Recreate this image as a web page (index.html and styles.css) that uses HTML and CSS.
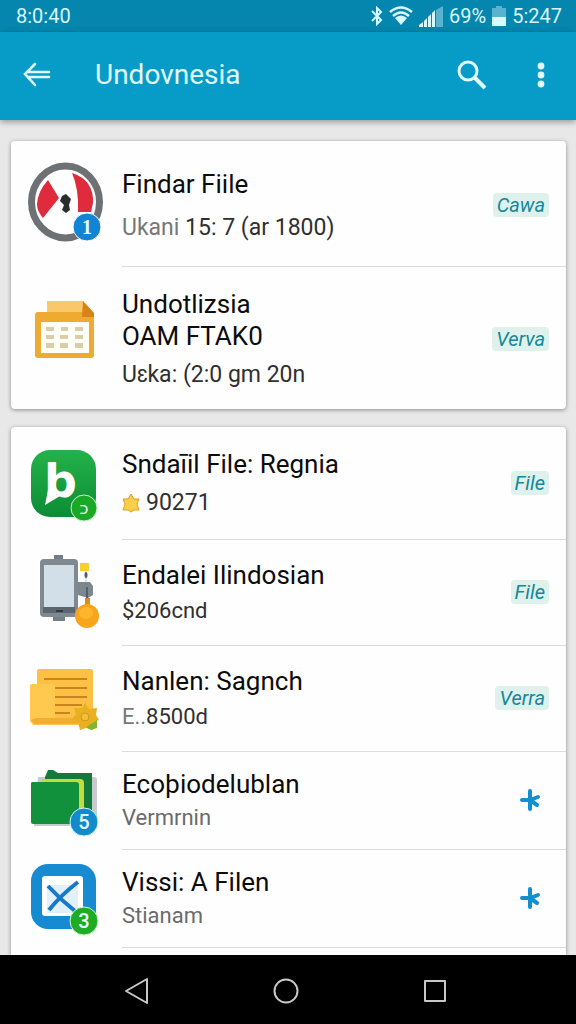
FILE: index.html
```html
<!DOCTYPE html>
<html lang="id">
<head>
    <meta charset="UTF-8">
    <meta name="viewport" content="width=device-width, initial-scale=1.0">
    <title>Undovnesia</title>
    <link rel="stylesheet" href="styles.css">
</head>
<body>
    <div class="status-bar">
        <span>8:0:40</span>
        <div class="status-icons">
            <svg width="12" height="20" viewBox="0 0 12 20" fill="none" stroke="currentColor" stroke-width="2"><path d="M1 5l9 9-4 4V2l4 4-9 9"/></svg>
            <svg width="24" height="20" viewBox="0 0 24 20" fill="none" stroke="currentColor" stroke-width="2.6"><path d="M1 6Q12-3 23 6M4 10Q12 3 20 10"/><path d="M6 12Q12 7 18 12L12 19z" fill="currentColor" stroke="none"/></svg>
            <svg width="24" height="21" viewBox="0 0 24 21" fill="currentColor"><path d="M0 21v-2l4-3v5zM5 21v-6l3-3v9zM9 21V11l3-3v13zM13 21V7l3-3v17z"/><path d="M17 21V4l7-4v21z" opacity=".4"/></svg>
            <span>69%</span>
            <svg width="14" height="20" viewBox="0 0 14 20" fill="currentColor"><path d="M0 2h4V0h6v2h4v10H0z" opacity=".4"/><path d="M0 11h14v9H0z"/></svg>
            <span>5:247</span>
        </div>
    </div>

    <header class="app-bar">
        <button class="icon-button" aria-label="Kembali">
            <svg width="28" height="26" viewBox="0 0 28 26" fill="none" stroke="currentColor" stroke-width="2.6" stroke-linecap="round"><path d="M12 2L2 12l10 11M5 10h21M5 15h21"/></svg>
        </button>
        <h1>Undovnesia</h1>
        <button class="icon-button" aria-label="Cari">
            <svg width="30" height="30" viewBox="0 0 30 30" fill="none" stroke="currentColor" stroke-width="3"><circle cx="11" cy="11" r="9"/><path d="M17 17l11 11" stroke-width="4"/></svg>
        </button>
        <button class="icon-button more" aria-label="Menu">
            <svg width="8" height="26" viewBox="0 0 8 26" fill="currentColor"><circle cx="4" cy="4" r="3.400"/><circle cx="4" cy="13" r="3.400"/><circle cx="4" cy="22" r="3.400"/></svg>
        </button>
    </header>

    <main class="content">
        <section class="card">
            <article class="row">
                <svg class="row-icon" viewBox="0 0 76 84">
                    <ellipse cx="37.500" cy="40" rx="34" ry="36" fill="#fff" stroke="#6d7173" stroke-width="7"/>
                    <path d="M20 18L31 36 15 56Q9 49 9 42 10 29 20 18z" fill="#df2b3b"/>
                    <path d="M44 11Q66 18 65 41L63 50H50Q51 27 44 11z" fill="#df2b3b"/>
                    <path d="M38 32l5 5-2 6 1 5-4 3-4-3 2-5-4-4 2-5z" fill="#292d2e"/>
                    <circle cx="59" cy="65" r="14" fill="#1184d4" stroke="#fff"/>
                    <text class="badge serif" x="59" y="72">1</text>
                </svg>
                <div class="row-body first">
                    <div class="row-text">
                        <h2>Findar Fiile</h2>
                        <p class="dark"><span class="faded">Ukani</span> 15: 7 (ar 1800)</p>
                    </div>
                    <button class="tag">Cawa</button>
                </div>
            </article>
            <article class="row">
                <svg class="row-icon" viewBox="0 0 76 84">
                    <path d="M19 5h36l11 12v8H19z" fill="#fbc76b"/>
                    <rect x="7" y="16" width="59" height="46" rx="3" fill="#efaa32"/>
                    <path d="M19 5h36v11H19z" fill="#fbc76b"/>
                    <path d="M55 5l11 12v4H54z" fill="#d88218"/>
                    <path d="M13 26h48v31H13z" fill="#fffef7"/>
                    <path d="M18 31h8v4h-8zM33 31h7v4h-7zM47 31h8v4h-8zM18 39h8v4h-8zM32 39h8v4h-8zM47 39h8v4h-8zM18 47h8v5h-8zM32 47h8v5h-8zM47 47h8v5h-8z" fill="#dccda9"/>
                </svg>
                <div class="row-body roomy">
                    <div class="row-text">
                        <h2>Undotlizsia<br>OAM FTAK0</h2>
                        <p class="dark">Uɛka: (2:0 gm 20n</p>
                    </div>
                    <button class="tag">Verva</button>
                </div>
            </article>
        </section>

        <section class="card last">
            <article class="row">
                <svg class="row-icon" viewBox="0 0 76 84">
                    <defs>
                        <linearGradient id="green" x1="0" y1="0" x2="0" y2="1"><stop stop-color="#24b24b"/><stop offset="1" stop-color="#0c8c35"/></linearGradient>
                    </defs>
                    <rect x="3" y="8" width="65" height="67" rx="19" fill="url(#green)"/>
                    <text class="logo" x="16" y="55">b</text>
                    <path d="M20 48L17 63 32 54z" fill="#fff"/>
                    <circle cx="56" cy="66" r="13" fill="#19a927" stroke="#c9f2c7"/>
                    <text class="badge small" x="56" y="72">כ</text>
                </svg>
                <div class="row-body roomy">
                    <div class="row-text">
                        <h2>Sndaīil File: Regnia</h2>
                        <p class="dark rating">
                            <svg width="18" height="20" viewBox="0 0 18 20"><path d="M9 1l3 5 5 0-2 5 2 6-5 0-3 2-3-2-5 0 2-6-2-5 5 0z" fill="#f8cf45" stroke="#d99e2b" stroke-linejoin="round"/></svg>
                            90271
                        </p>
                    </div>
                    <button class="tag">File</button>
                </div>
            </article>
            <article class="row">
                <svg class="row-icon" viewBox="0 0 76 84">
                    <path d="M26 4h9v6h-9zM25 65h12v5H25z" fill="#747e87"/>
                    <rect x="12" y="8" width="38" height="58" rx="4" fill="#7e8992"/>
                    <path d="M15 56h32v6H15z" fill="#5b6670"/>
                    <rect x="16" y="14" width="30" height="42" fill="#d3dfe8"/>
                    <path d="M28 60h7" stroke="#303a41" stroke-width="2"/>
                    <path d="M52 12h9v8h-9z" fill="#f7cf32"/>
                    <path d="M58 20v14" stroke="#c4cace"/>
                    <ellipse cx="58" cy="24" rx="1.500" ry="3" fill="#555c60"/>
                    <path d="M50 31h12l3 4v9l-5 3-10-3z" fill="#7c8790"/>
                    <path d="M59 36v12" stroke="#566069" stroke-width="2"/>
                    <path d="M57 47h5v9h-5z" fill="#d98d20"/>
                    <circle cx="59" cy="65" r="12" fill="#f7a51b"/>
                    <ellipse cx="58" cy="62" rx="7" ry="6" fill="#ffb62c"/>
                </svg>
                <div class="row-body">
                    <div class="row-text">
                        <h2>Endalei Ilindosian</h2>
                        <p class="dark">$206cnd</p>
                    </div>
                    <button class="tag">File</button>
                </div>
            </article>
            <article class="row">
                <svg class="row-icon" viewBox="0 0 76 84">
                    <path d="M11 12h52q2 0 2 2v51H9V14q0-2 2-2z" fill="#fbc044"/>
                    <path d="M4 27h23v34l24 1v6H5l-3-4V29q0-2 2-2z" fill="#ffc94f"/>
                    <path d="M3 63l5-2h43v6H6z" fill="#f2ae30"/>
                    <path d="M16 22h43M27 31h32M27 40h32M27 48h27M27 56h15" stroke="#c98420" stroke-width="2"/>
                    <path d="M57 46l4 6 8-1-1 7 3 5-5 2-1 8-7-2-6 2-2-8-6-3 4-5-2-6 8 0z" fill="#e9b020"/>
                    <path d="M69 63v8l-6 2-5-3z" fill="#83b52c"/>
                    <circle cx="57" cy="60" r="4" fill="#f1bf36" stroke="#cf971d"/>
                </svg>
                <div class="row-body">
                    <div class="row-text">
                        <h2>Nanlen: Sagnch</h2>
                        <p class="dark"><span class="faded">E..</span>8500d</p>
                    </div>
                    <button class="tag">Verra</button>
                </div>
            </article>
            <article class="row">
                <svg class="row-icon" viewBox="0 0 76 84">
                    <path d="M10 18h56q3 0 3 3v46H6z" fill="#c7cbd0"/>
                    <path d="M17 18l3-7h5l5 3h34v50H17z" fill="#147a3c"/>
                    <path d="M14 20h38q4 0 4 4v36h-6V27H14z" fill="#c3dc3c"/>
                    <path d="M4 23h44q3 0 3 3v39H5q-2 0-2-2V24z" fill="#12913d"/>
                    <circle cx="56" cy="63" r="14" fill="#118bcb" stroke="#d5f2ff"/>
                    <text class="badge" x="56" y="70">5</text>
                </svg>
                <div class="row-body compact">
                    <div class="row-text">
                        <h2>Ecoþiodelublan</h2>
                        <p>Vermrnin</p>
                    </div>
                    <button class="star" aria-label="Tandai">
                        <svg width="22" height="24" viewBox="0 0 22 24" fill="none" stroke="#118fcf" stroke-width="4" stroke-linecap="round"><path d="M11 3v18M3 12h8l8-3M11 12l7 5"/></svg>
                    </button>
                </div>
            </article>
            <article class="row">
                <svg class="row-icon" viewBox="0 0 76 84">
                    <rect x="3" y="7" width="65" height="65" rx="17" fill="#168bd2"/>
                    <rect x="14" y="19" width="41" height="40" rx="3" fill="#fff"/>
                    <path d="M19 28h31v28H19z" fill="#e2f0fb"/>
                    <path d="M20 29q13 14 27 25M21 53q12-15 29-28" fill="none" stroke="#1679c9" stroke-width="4"/>
                    <circle cx="56" cy="64" r="14" fill="#1eac25" stroke="#d5f7ce"/>
                    <text class="badge" x="56" y="71">3</text>
                </svg>
                <div class="row-body compact">
                    <div class="row-text">
                        <h2>Vissi: A Filen</h2>
                        <p>Stianam</p>
                    </div>
                    <button class="star" aria-label="Tandai">
                        <svg width="22" height="24" viewBox="0 0 22 24" fill="none" stroke="#118fcf" stroke-width="4" stroke-linecap="round"><path d="M11 3v18M3 12h8l8-3M11 12l7 5"/></svg>
                    </button>
                </div>
            </article>
        </section>
    </main>

    <nav class="nav-bar">
        <button aria-label="Kembali"><svg width="28" height="28" viewBox="0 0 28 28"><path d="M3 14L24 2v24z"/></svg></button>
        <button aria-label="Beranda"><svg width="28" height="28" viewBox="0 0 28 28"><circle cx="14" cy="14" r="11.500"/></svg></button>
        <button aria-label="Terbaru"><svg width="28" height="28" viewBox="0 0 28 28"><path d="M4 4h20v20H4z"/></svg></button>
    </nav>
</body>
</html>
```
FILE: styles.css
```css
* {
    box-sizing: border-box;
}
body {
    margin: 0;
    height: 100vh;
    display: flex;
    flex-direction: column;
    font-family: Roboto, "Liberation Sans", sans-serif;
    background-color: #e8e8e8;
}
h1, h2, p {
    margin: 0;
    font-weight: 400;
}
svg {
    display: block;
}
button {
    padding: 0;
    border: none;
    background: none;
    color: inherit;
    font-family: inherit;
    cursor: pointer;
}

/* Status bar */
.status-bar {
    flex: none;
    height: 32px;
    padding: 0 14px 0 16px;
    display: flex;
    align-items: center;
    justify-content: space-between;
    background-color: #0586af;
    color: #d8f8ff;
    font-size: 20px;
}
.status-icons {
    display: flex;
    align-items: center;
    gap: 6px;
}

/* App bar */
.app-bar {
    flex: none;
    height: 88px;
    padding: 0 31px 2px 23px;
    display: flex;
    align-items: center;
    background-color: #079bc8;
    color: #e0fbff;
    box-shadow: 0 2px 6px rgba(0, 0, 0, 0.35);
    z-index: 1;
}
.app-bar h1 {
    flex: 1;
    padding-left: 44px;
    font-size: 28px;
    line-height: 36px;
}
.more {
    margin-left: 50px;
}

/* Cards */
.content {
    flex: 1;
    min-height: 0;
    padding: 21px 10px 0 11px;
    display: flex;
    flex-direction: column;
    gap: 18px;
    overflow: hidden;
}
.card {
    flex: none;
    background-color: #fefefe;
    border-radius: 4px;
    box-shadow: 0 1px 4px rgba(0, 0, 0, 0.4);
}
.card.last {
    flex: 1 0 auto;
    border-radius: 4px 4px 0 0;
}
.row {
    display: flex;
    align-items: center;
    gap: 18px;
    padding-left: 17px;
}
.row-icon {
    flex: none;
    width: 76px;
    height: 84px;
}
.row-body {
    flex: 1;
    display: flex;
    align-items: center;
    justify-content: space-between;
    padding: 19px 17px 20px 0;
    border-bottom: 1px solid #dcdcdc;
}
.row-body.first {
    padding-top: 27px;
    padding-bottom: 24px;
}
.row-body.roomy {
    padding-top: 21px;
    padding-bottom: 22px;
}
.row-body.compact {
    padding-top: 16px;
    padding-bottom: 17px;
}
.card:not(.last) .row:last-child .row-body {
    border-bottom: none;
    padding-bottom: 20px;
}
.row h2 {
    color: #0c0c0c;
    font-size: 26px;
    line-height: 32px;
}
.row p {
    margin-top: 6px;
    color: #6b6b6b;
    font-size: 22px;
    line-height: 28px;
}
.row p.dark {
    color: #303030;
}
.row .first p {
    margin-top: 14px;
    font-size: 23px;
}
.row .roomy p {
    margin-top: 9px;
    font-size: 23px;
}
.row .compact p {
    margin-top: 4px;
}
.row .faded {
    color: #777;
}
.row .rating {
    display: flex;
    align-items: center;
    gap: 6px;
}
.tag {
    padding: 0 4px;
    border-radius: 4px;
    background-color: #def2eb;
    color: #16879c;
    font-size: 20px;
    font-style: italic;
    line-height: 24px;
}
.star {
    margin-right: 8px;
}

/* Icon lettering */
.badge {
    fill: #e4fbff;
    font-size: 20px;
    font-weight: 500;
    text-anchor: middle;
}
.badge.serif {
    font-family: "Liberation Serif", serif;
    font-weight: 700;
}
.badge.small {
    font-size: 17px;
    font-family: "DejaVu Sans", sans-serif;
}
.logo {
    fill: #fff;
    font-family: "DejaVu Sans", sans-serif;
    font-size: 46px;
    font-weight: 700;
}

/* Navigation bar */
.nav-bar {
    flex: none;
    height: 69px;
    padding: 2px 66px 0 62px;
    display: flex;
    align-items: center;
    justify-content: space-around;
    background-color: #000;
}
.nav-bar svg {
    fill: none;
    stroke: #c8c8c8;
    stroke-width: 2;
    stroke-linejoin: round;
}
```
